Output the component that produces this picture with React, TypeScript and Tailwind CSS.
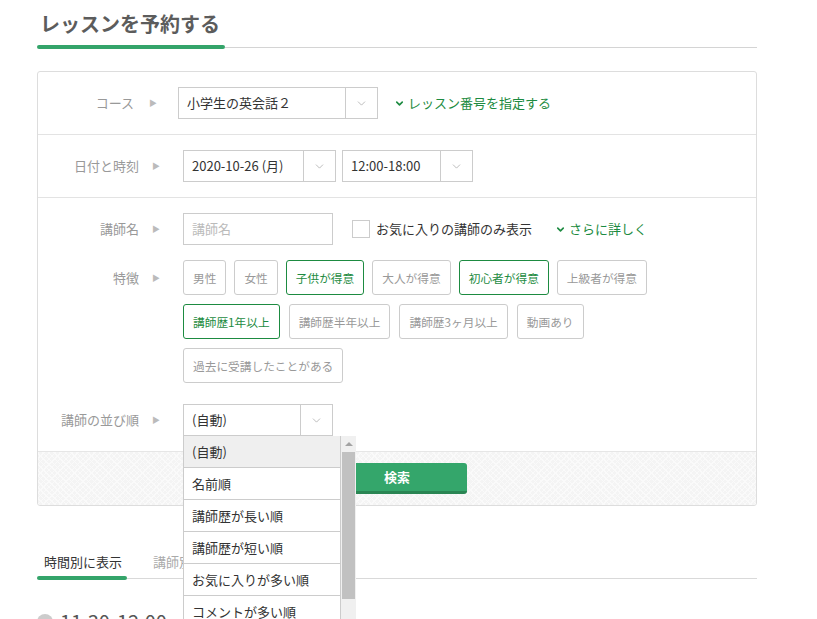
import { ChevronDown } from 'lucide-react'

const GREEN = '#1d8b41'

function Label({ children }: { children: React.ReactNode }) {
  return (
    <div className="w-[145px] shrink-0 flex items-center justify-end gap-[13px] pr-[23px] text-[13px] text-[#999]">
      <span>{children}</span>
      <span className="text-[8px] text-[#bbb]">▶</span>
    </div>
  )
}

function Select({ value, width, btn = 32 }: { value: string; width: number; btn?: number }) {
  return (
    <div
      className="flex h-[32px] border border-[#ccc] bg-white text-[13px] text-[#333]"
      style={{ width }}
    >
      <div className="flex-1 flex items-center pl-[8px]">{value}</div>
      <div className="flex items-center justify-center border-l border-[#ccc]" style={{ width: btn }}>
        <ChevronDown size={13} strokeWidth={1.2} color="#999" />
      </div>
    </div>
  )
}

function Tag({ text, on = false }: { text: string; on?: boolean }) {
  return (
    <div
      className={
        on
          ? 'h-[35px] px-[9px] flex items-center rounded-[3px] border border-[#1d8b41] text-[11.7px] text-[#1d8b41]'
          : 'h-[35px] px-[9px] flex items-center rounded-[3px] border border-[#ccc] text-[11.7px] text-[#999]'
      }
    >
      {text}
    </div>
  )
}

function GreenLink({ text }: { text: string }) {
  return (
    <div className="flex items-center gap-[3px] text-[13px] text-[#1d8b41]">
      <ChevronDown size={11} strokeWidth={3.5} color={GREEN} />
      <span>{text}</span>
    </div>
  )
}

const sorts = ['(自動)', '名前順', '講師歴が長い順', '講師歴が短い順', 'お気に入りが多い順', 'コメントが多い順', 'レビューが多い順']

export default function App() {
  return (
    <div
      className="w-[817px] h-[619px] overflow-hidden bg-white"
      style={{ fontFamily: '"Noto Sans CJK JP", "Noto Sans", sans-serif' }}
    >
      <div className="ml-[37px] w-[720px]">
        {/* Title */}
        <h1 className="pt-[9px] pl-[3px] text-[20px] leading-[30px] font-bold text-[#5c5c5c]">レッスンを予約する</h1>
        <div className="mt-[6px] flex items-end">
          <div className="w-[188px] h-[4px] rounded-full bg-[#34a46a]" />
          <div className="flex-1 h-[1px] mb-[1px] bg-[#d4d4d4]" />
        </div>

        {/* Form */}
        <div className="mt-[22px] border border-[#ddd] rounded-[3px]">
          <div className="flex py-[15px] border-b border-[#e3e3e3]">
            <div className="w-[145px] shrink-0 flex items-center justify-end gap-[15px] pr-[26px] text-[13px] text-[#999]">
              <span>コース</span>
              <span className="text-[8px] text-[#bbb]">▶</span>
            </div>
            <div className="-ml-[5px] flex items-center gap-[16px]">
              <Select value="小学生の英会話２" width={200} />
              <GreenLink text="レッスン番号を指定する" />
            </div>
          </div>

          <div className="flex py-[15px] border-b border-[#e3e3e3]">
            <Label>日付と時刻</Label>
            <div className="flex items-center gap-[6px]">
              <Select value="2020-10-26 (月)" width={153} />
              <Select value="12:00-18:00" width={131} />
            </div>
          </div>

          <div className="pt-[15px] pb-[15px]">
            <div className="flex">
              <Label>講師名</Label>
              <div className="flex items-center">
                <div className="w-[150px] h-[32px] border border-[#ccc] flex items-center pl-[8px] text-[13px] text-[#bbb]">講師名</div>
                <div className="ml-[19px] w-[18px] h-[18px] border border-[#ccc] bg-white" />
                <span className="ml-[6px] text-[13px] text-[#333]">お気に入りの講師のみ表示</span>
                <div className="ml-[23px]">
                  <GreenLink text="さらに詳しく" />
                </div>
              </div>
            </div>

            <div className="flex mt-[15px]">
              <div className="h-[35px] flex">
                <Label>特徴</Label>
              </div>
              <div className="flex flex-col gap-[9px]">
                <div className="flex gap-[8px]">
                  <Tag text="男性" />
                  <Tag text="女性" />
                  <Tag text="子供が得意" on />
                  <Tag text="大人が得意" />
                  <Tag text="初心者が得意" on />
                  <Tag text="上級者が得意" />
                </div>
                <div className="flex gap-[9px]">
                  <Tag text="講師歴1年以上" on />
                  <Tag text="講師歴半年以上" />
                  <Tag text="講師歴3ヶ月以上" />
                  <Tag text="動画あり" />
                </div>
                <div className="flex">
                  <Tag text="過去に受講したことがある" />
                </div>
              </div>
            </div>

            <div className="flex mt-[21px]">
              <Label>講師の並び順</Label>
              <div className="relative">
                <Select value="(自動)" width={150} />
                {/* open dropdown */}
                <div className="absolute left-0 top-full z-10 w-[173px] flex bg-white">
                  <div className="w-[157px] border-l border-[#ccc]">
                    {sorts.map((s, i) => (
                      <div
                        key={s}
                        className={
                          i === 0
                            ? 'h-[32px] flex items-center pl-[8px] border-b border-[#ccc] bg-[#efefef] text-[13px] text-[#333]'
                            : 'h-[32px] flex items-center pl-[8px] border-b border-[#ccc] bg-white text-[13px] text-[#333]'
                        }
                      >
                        {s}
                      </div>
                    ))}
                  </div>
                  <div className="w-[16px] bg-[#f0f0f0] border-l border-[#ccc] flex flex-col items-center">
                    <div className="mt-[6px] w-0 h-0 border-l-[4px] border-r-[4px] border-b-[4px] border-l-transparent border-r-transparent border-b-[#a3a3a3]" />
                    <div className="mt-[6px] w-[13px] h-[147px] bg-[#c1c1c1]" />
                  </div>
                </div>
              </div>
            </div>
          </div>

          {/* Footer */}
          <div className="border-t border-[#e6e6e6] bg-[#f4f4f4] [background-image:repeating-linear-gradient(45deg,#fafafa_0_1px,transparent_1px_4px),repeating-linear-gradient(-45deg,#fafafa_0_1px,transparent_1px_4px)] pt-[11px] pb-[11px] flex justify-center rounded-b-[3px]">
            <button className="w-[140px] h-[31px] rounded-[3px] bg-[#34a66b] border-b-[3px] border-[#2a8553] text-[13px] font-bold text-white">
              検索
            </button>
          </div>
        </div>

        {/* Tabs */}
        <div className="mt-[46px] flex border-b border-[#d9d9d9]">
          <div className="w-[90px] flex flex-col">
            <span className="pl-[7px] text-[13px] leading-[20px] text-[#333]">時間別に表示</span>
            <div className="mt-[4px] -mb-[2px] h-[4px] rounded-full bg-[#34a46a]" />
          </div>
          <span className="ml-[26px] text-[13px] leading-[20px] text-[#aaa]">講師別に表示</span>
        </div>

        <div className="mt-[30px] flex items-center gap-[7px]">
          <div className="w-[16px] h-[16px] rounded-full bg-[#ccc]" />
          <span className="text-[20px] leading-[26px] text-[#555]">11:30-12:00</span>
        </div>
      </div>
    </div>
  )
}
